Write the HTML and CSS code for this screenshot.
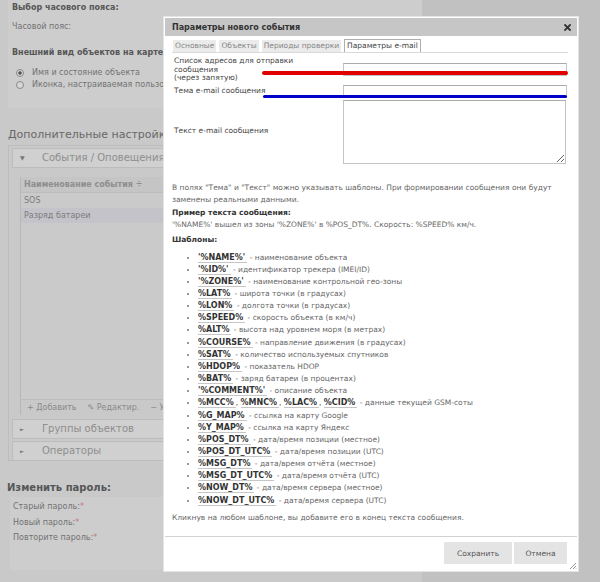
FILE: index.html
```html
<!DOCTYPE html>
<html lang="ru">
<head>
    <meta charset="UTF-8">
    <meta name="viewport" content="width=device-width, initial-scale=1.0">
    <title>Параметры нового события</title>
    <link rel="stylesheet" href="styles.css">
</head>
<body>
<div class="page">
    <div class="tz-panel">
        <h3 class="tz-title">Выбор часового пояса:</h3>
        <div class="tz-row">Часовой пояс:</div>
        <h3 class="tz-title view-title">Внешний вид объектов на карте:</h3>
        <label class="radio-row first"><span class="radio checked"></span>Имя и состояние объекта</label>
        <label class="radio-row"><span class="radio"></span>Иконка, настраиваемая пользователем</label>
    </div>

    <h2 class="section-title">Дополнительные настройки</h2>
    <div class="settings">
        <div class="acc-head"><span class="acc-arrow">▼</span>События / Оповещения</div>
        <div class="acc-body">
            <div class="grid">
                <div class="grid-head">Наименование события ÷</div>
                <div class="grid-row">SOS</div>
                <div class="grid-row selected">Разряд батареи</div>
            </div>
            <div class="grid-tools">
                <span>+ Добавить</span>
                <span>✎ Редактир.</span>
                <span>− Удалить</span>
            </div>
        </div>
        <div class="acc-head"><span class="acc-arrow small">►</span>Группы объектов</div>
        <div class="acc-head"><span class="acc-arrow small">►</span>Операторы</div>
    </div>

    <h2 class="pass-title">Изменить пароль:</h2>
    <div class="pass-panel">
        <div class="pass-row">Старый пароль:<span class="req">*</span></div>
        <div class="pass-row">Новый пароль:<span class="req">*</span></div>
        <div class="pass-row">Повторите пароль:<span class="req">*</span></div>
    </div>
</div>

<div class="dialog">
    <div class="dlg-title">
        Параметры нового события
        <svg class="dlg-close" width="7" height="7" viewBox="0 0 7 7">
            <path d="M1 1 L6 6 M6 1 L1 6" stroke="#333" stroke-width="1.8" stroke-linecap="square"/>
        </svg>
    </div>

    <div class="dlg-body">
        <div class="tabs">
            <span class="tab">Основные</span>
            <span class="tab">Объекты</span>
            <span class="tab">Периоды проверки</span>
            <span class="tab active">Параметры e-mail</span>
        </div>

        <div class="mail-form">
            <label class="field-label" for="mail-to">Список адресов для отправки<br>сообщения<br>(через запятую)</label>
            <input class="field-input" type="text" id="mail-to">
            <label class="field-label" for="mail-subj">Тема e-mail сообщения</label>
            <input class="field-input" type="text" id="mail-subj">
            <label class="field-label" for="mail-text">Текст e-mail сообщения</label>
            <textarea class="field-text" id="mail-text"></textarea>
        </div>

        <p class="hint">В полях "Тема" и "Текст" можно указывать шаблоны. При формировании сообщения они будут<br>заменены реальными данными.</p>

        <div class="example-title">Пример текста сообщения:</div>
        <div class="example">'%NAME%' вышел из зоны '%ZONE%' в %POS_DT%. Скорость: %SPEED% км/ч.</div>

        <div class="tpl-title">Шаблоны:</div>
        <ul class="tpl-list">
            <li><a class="tpl">'%NAME%'</a> - наименование объекта</li>
            <li><a class="tpl">'%ID%'</a> - идентификатор трекера (IMEI/ID)</li>
            <li><a class="tpl">'%ZONE%'</a> - наименование контрольной гео-зоны</li>
            <li><a class="tpl">%LAT%</a> - широта точки (в градусах)</li>
            <li><a class="tpl">%LON%</a> - долгота точки (в градусах)</li>
            <li><a class="tpl">%SPEED%</a> - скорость объекта (в км/ч)</li>
            <li><a class="tpl">%ALT%</a> - высота над уровнем моря (в метрах)</li>
            <li><a class="tpl">%COURSE%</a> - направление движения (в градусах)</li>
            <li><a class="tpl">%SAT%</a> - количество используемых спутников</li>
            <li><a class="tpl">%HDOP%</a> - показатель HDOP</li>
            <li><a class="tpl">%BAT%</a> - заряд батареи (в процентах)</li>
            <li><a class="tpl">'%COMMENT%'</a> - описание объекта</li>
            <li><a class="tpl">%MCC%</a>, <a class="tpl">%MNC%</a>, <a class="tpl">%LAC%</a>, <a class="tpl">%CID%</a> - данные текущей GSM-соты</li>
            <li><a class="tpl">%G_MAP%</a> - ссылка на карту Google</li>
            <li><a class="tpl">%Y_MAP%</a> - ссылка на карту Яндекс</li>
            <li><a class="tpl">%POS_DT%</a> - дата/время позиции (местное)</li>
            <li><a class="tpl">%POS_DT_UTC%</a> - дата/время позиции (UTC)</li>
            <li><a class="tpl">%MSG_DT%</a> - дата/время отчёта (местное)</li>
            <li><a class="tpl">%MSG_DT_UTC%</a> - дата/время отчёта (UTC)</li>
            <li><a class="tpl">%NOW_DT%</a> - дата/время сервера (местное)</li>
            <li><a class="tpl">%NOW_DT_UTC%</a> - дата/время сервера (UTC)</li>
        </ul>

        <p class="hint hint-last">Кликнув на любом шаблоне, вы добавите его в конец текста сообщения.</p>
    </div>

    <div class="dlg-footer">
        <button type="button" class="btn btn-save">Сохранить</button>
        <button type="button" class="btn btn-cancel">Отмена</button>
    </div>

    <svg class="grip" width="8" height="8" viewBox="0 0 8 8">
        <path d="M7 1 L1 7 M7 4 L4 7 M7 6.5 L6.5 7" stroke="#8c8c8c" stroke-width="0.9"/>
    </svg>

    <!-- пометки поверх скриншота -->
    <span class="mark mark-red"></span>
    <span class="mark mark-blue"></span>
</div>
</body>
</html>
```

FILE: styles.css
```css
body {
    margin: 0;
    padding: 0;
    background-color: #c1c1c1;
    font-family: "DejaVu Sans", Verdana, sans-serif;
    font-size: 8px;
    color: #727272;
}

/* страница под затемнением */
.page {
    width: 422px;
    height: 582px;
    background-color: #c9c9c9;
    overflow: hidden;
}

.tz-panel {
    margin-left: 8px;
    height: 108px;
    box-sizing: border-box;
    padding: 2px 4px 0;
    background-color: #cdcdcd;
}

.tz-title {
    margin: 0;
    font-size: 8px;
    line-height: 12px;
    font-weight: bold;
    color: #565656;
    white-space: nowrap;
}

.tz-row {
    margin-top: 7px;
    line-height: 12px;
}

.view-title {
    margin-top: 14px;
}

.radio-row {
    display: flex;
    align-items: center;
    line-height: 12px;
    padding-left: 4px;
    white-space: nowrap;
}

.radio-row.first {
    margin-top: 8px;
}

.radio {
    width: 8px;
    height: 8px;
    box-sizing: border-box;
    border: 1px solid #8a8a8a;
    border-radius: 50%;
    margin-right: 8px;
    background: #d6d6d6;
}

.radio.checked {
    background: radial-gradient(circle, #555 0 1.4px, #d6d6d6 2px);
}

.section-title {
    margin: 19px 0 0 8px;
    font-size: 11px;
    line-height: 16px;
    font-weight: normal;
    color: #686868;
    white-space: nowrap;
}

.settings {
    margin: 2px 0 0 8px;
    height: 316px;
    box-sizing: border-box;
    border: 1px solid #bdbdbd;
    padding: 2px 3px;
}

.acc-head {
    display: flex;
    height: 20px;
    box-sizing: border-box;
    margin-bottom: 2px;
    border: 1px solid #bcbcbc;
    background-color: #d0d0d0;
    font-size: 10px;
    line-height: 18px;
    color: #8e8e8e;
    white-space: nowrap;
}

.acc-arrow {
    width: 29px;
    box-sizing: border-box;
    padding-left: 7px;
    font-size: 6px;
    color: #777;
}

.acc-arrow.small {
    font-size: 5px;
}

.acc-body {
    height: 247px;
    box-sizing: border-box;
    margin-bottom: 2px;
    padding: 7px 0 0 8px;
}

.grid {
    height: 222px;
    border-left: 1px solid #b7b7b7;
    background-color: #cacaca;
}

.grid-head {
    height: 15px;
    line-height: 15px;
    padding-left: 3px;
    font-weight: bold;
    color: #8e8e8e;
    background-color: #c5c5c5;
    border-bottom: 1px solid #bdbdbd;
    white-space: nowrap;
}

.grid-row {
    height: 15px;
    line-height: 15px;
    padding-left: 3px;
    color: #7c7c7c;
}

.grid-row.selected {
    background-color: #c3c3c9;
}

.grid-tools {
    display: flex;
    gap: 11px;
    height: 15px;
    line-height: 15px;
    padding-left: 6px;
    border-left: 1px solid #b7b7b7;
    border-top: 1px solid #bcbcbc;
    color: #8a8a8a;
    white-space: nowrap;
}

.pass-title {
    margin: 19px 0 0 7px;
    font-size: 10px;
    line-height: 16px;
    font-weight: bold;
    color: #565656;
}

.pass-panel {
    margin: 1px 0 0 10px;
    height: 73px;
    box-sizing: border-box;
    padding: 2px 0 0 3px;
    background-color: #cdcdcd;
}

.pass-row {
    line-height: 15.5px;
}

.req {
    color: #c47a7a;
}

/* окно */
.dialog {
    position: absolute;
    left: 163px;
    top: 16px;
    width: 416px;
    height: 556px;
    box-sizing: border-box;
    display: flex;
    flex-direction: column;
    padding: 1px;
    border: 1px solid #e4e4e4;
    background-color: #fff;
    font-size: 7.5px;
    color: #666;
}

.dlg-title {
    display: flex;
    align-items: center;
    justify-content: space-between;
    height: 18px;
    box-sizing: border-box;
    padding: 1px 6px 0 7px;
    background-color: #c6c6c6;
    font-size: 8px;
    font-weight: bold;
    color: #333;
}

.dlg-body {
    flex: 1;
    padding: 3px 9px 0 7px;
}

.tabs {
    display: flex;
    align-items: flex-end;
    gap: 3px;
    height: 13px;
    padding-left: 1px;
    border-bottom: 1px solid #dadada;
}

.tab {
    height: 12px;
    line-height: 12px;
    padding: 0 2px;
    background-color: #ebebeb;
    color: #858585;
    white-space: nowrap;
}

.tab.active {
    height: 13px;
    box-sizing: border-box;
    line-height: 12px;
    padding: 0 2px;
    border: 1px solid #aeaeae;
    border-bottom: none;
    background-color: #fff;
    color: #444;
}

.mail-form {
    display: grid;
    grid-template-columns: 171px 224px;
    align-items: center;
    row-gap: 2px;
    margin-top: 4px;
}

.field-label {
    padding-left: 2px;
    line-height: 8.5px;
    color: #444;
}

.field-input {
    width: 224px;
    height: 13px;
    box-sizing: border-box;
    margin: 0;
    padding: 0 2px;
    border: 1px solid #c4c4c4;
    border-top-color: #ababab;
    font: 8px "DejaVu Sans", sans-serif;
}

.field-text {
    width: 223px;
    height: 64px;
    box-sizing: border-box;
    margin: 0;
    padding: 1px 2px;
    border: 1px solid #c4c4c4;
    border-top-color: #ababab;
    font: 8px "DejaVu Sans", sans-serif;
}

.hint {
    margin: 18px 0 0;
    line-height: 12px;
    white-space: nowrap;
}

.example-title {
    margin-top: 1.5px;
    line-height: 12px;
    font-weight: bold;
    color: #333;
}

.example {
    line-height: 12px;
}

.tpl-title {
    margin-top: 3px;
    line-height: 12px;
    font-weight: bold;
    color: #333;
}

.tpl-list {
    margin: 5.5px 0 0;
    padding-left: 26px;
    line-height: 12.15px;
    white-space: nowrap;
}

.tpl-list li::marker {
    color: #777;
}

.tpl {
    font-size: 8px;
    font-weight: bold;
    color: #333;
    padding-right: 2px;
    border-bottom: 1px solid #c6c6c6;
    cursor: pointer;
}

.hint-last {
    margin-top: 5.5px;
}

.dlg-footer {
    display: flex;
    justify-content: flex-end;
    gap: 2px;
    height: 34px;
    box-sizing: border-box;
    padding: 5px 10px 0 0;
    border-top: 1px solid #d2d2d2;
}

.btn {
    height: 22px;
    padding: 0;
    border: none;
    background-color: #e4e4e4;
    font: 7.5px "DejaVu Sans", sans-serif;
    color: #555;
    cursor: pointer;
}

.btn-save {
    width: 68px;
}

.btn-cancel {
    width: 53px;
}

.grip {
    position: absolute;
    right: 1px;
    bottom: 1px;
}

.mark {
    position: absolute;
    height: 3.5px;
    border-radius: 2px;
}

.mark-red {
    left: 98px;
    top: 54px;
    width: 306px;
    background-color: #e10000;
}

.mark-blue {
    left: 99px;
    top: 77.5px;
    width: 304px;
    background-color: #0000c8;
}
```
